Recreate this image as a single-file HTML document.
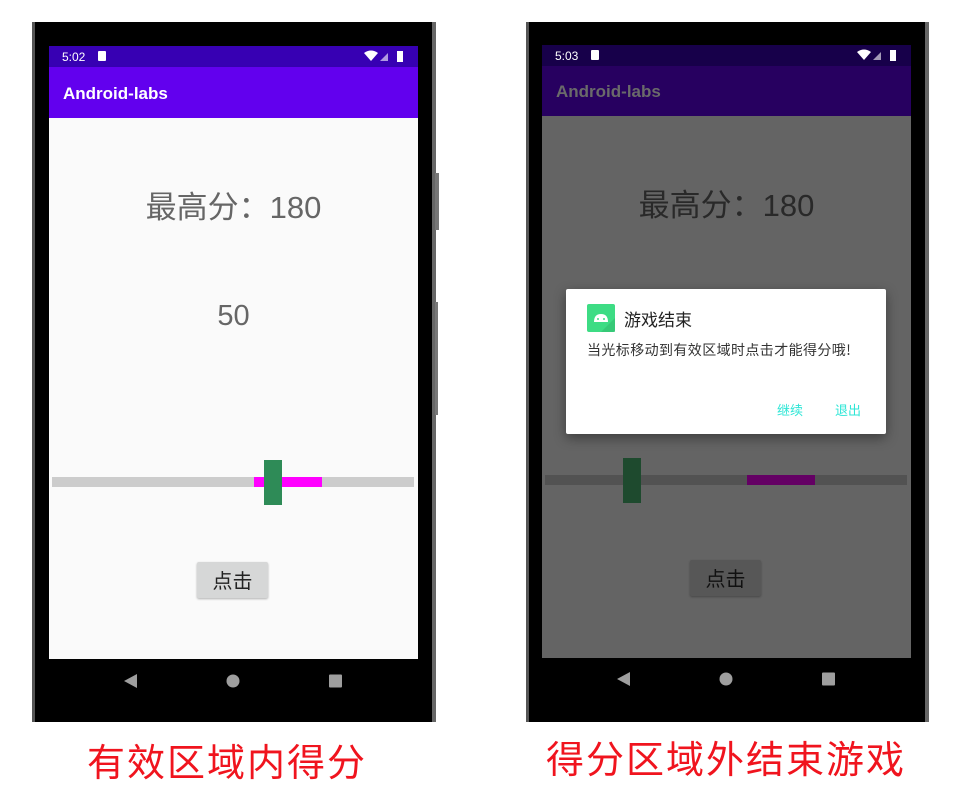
<!DOCTYPE html>
<html><head><meta charset="utf-8"><style>
*{margin:0;padding:0;box-sizing:border-box}
body{width:978px;height:812px;background:#fff;position:relative;overflow:hidden;font-family:"Liberation Sans","Noto Sans CJK SC",sans-serif}
.a{position:absolute}
.phone{background:#000;border-left:3px solid #555;border-right:4px solid #666}
.cjk{font-family:"Noto Sans CJK SC","WenQuanYi Zen Hei",sans-serif}
.mix{font-family:"Liberation Sans","Noto Sans CJK SC",sans-serif}
</style></head><body>

<div class="a phone" style="left:32px;top:22px;width:404px;height:700px"></div>
<div class="a" style="left:435px;top:173px;width:4px;height:57px;background:#777"></div>
<div class="a" style="left:435px;top:302px;width:3px;height:113px;background:#777"></div>
<div class="a" style="left:49px;top:46px;width:369px;height:21px;background:#3700b3"></div>
<div class="a" style="left:62px;top:50px;color:#fff;font-size:12px">5:02</div>
<div class="a" style="left:98px;top:51px;width:8px;height:10px;background:#fff;border-radius:1px"></div>
<svg class="a" style="left:364px;top:50px" width="44" height="14"><path d="M0 3 Q7 -2 14 3 L7 11Z" fill="#fff"/><path d="M16 11 L24 3 L24 11Z" fill="#fff" opacity=".6"/><rect x="33" y="1" width="6" height="11" fill="#fff"/></svg>
<div class="a" style="left:49px;top:67px;width:369px;height:51px;background:#6200ee;box-shadow:0 2px 3px rgba(0,0,0,.25)"></div>
<div class="a" style="left:63px;top:84px;color:#fff;font-size:17px;font-weight:bold">Android-labs</div>
<div class="a" style="left:49px;top:118px;width:369px;height:541px;background:#fafafa"></div>
<div class="a mix" style="left:49px;top:182px;width:369px;text-align:center;font-size:31px;color:#666">最高分：180</div>
<div class="a" style="left:49px;top:300px;width:369px;text-align:center;font-size:29px;color:#666">50</div>
<div class="a" style="left:52px;top:477px;width:362px;height:10px;background:#ccc"></div>
<div class="a" style="left:254px;top:477px;width:68px;height:10px;background:#f0f"></div>
<div class="a" style="left:264px;top:460px;width:18px;height:45px;background:#2e8b57"></div>
<div class="a cjk" style="left:197px;top:562px;width:71px;height:36px;background:#d6d7d7;box-shadow:0 1px 2px rgba(0,0,0,.3);border-radius:2px;text-align:center;line-height:36px;font-size:20px;color:#222">点击</div>
<div class="a" style="left:49px;top:659px;width:369px;height:63px;background:#000"></div>
<svg class="a" style="left:49px;top:659px" width="369" height="44"><path d="M75 22 L88 15 L88 29Z" fill="#9e9e9e"/><circle cx="184" cy="22" r="6.5" fill="#9e9e9e"/><rect x="280" y="15.5" width="13" height="13" rx="1" fill="#9e9e9e"/></svg>

<div class="a phone" style="left:526px;top:22px;width:403px;height:700px"></div>
<div class="a" style="left:542px;top:45px;width:369px;height:21px;background:#17004a"></div>
<div class="a" style="left:555px;top:49px;color:#fff;font-size:12px">5:03</div>
<div class="a" style="left:591px;top:50px;width:8px;height:10px;background:#fff;border-radius:1px"></div>
<svg class="a" style="left:857px;top:49px" width="44" height="14"><path d="M0 3 Q7 -2 14 3 L7 11Z" fill="#fff"/><path d="M16 11 L24 3 L24 11Z" fill="#fff" opacity=".6"/><rect x="33" y="1" width="6" height="11" fill="#fff"/></svg>
<div class="a" style="left:542px;top:66px;width:369px;height:50px;background:#270060"></div>
<div class="a" style="left:556px;top:82px;color:#6a6a6a;font-size:17px;font-weight:bold">Android-labs</div>
<div class="a" style="left:542px;top:116px;width:369px;height:542px;background:#646464"></div>
<div class="a mix" style="left:542px;top:180px;width:369px;text-align:center;font-size:31px;color:#292929">最高分：180</div>
<div class="a" style="left:545px;top:475px;width:362px;height:10px;background:#525252"></div>
<div class="a" style="left:747px;top:475px;width:68px;height:10px;background:#640064"></div>
<div class="a" style="left:623px;top:458px;width:18px;height:45px;background:#1e4a2e"></div>
<div class="a cjk" style="left:690px;top:560px;width:71px;height:36px;background:#575757;box-shadow:0 1px 2px rgba(0,0,0,.3);border-radius:2px;text-align:center;line-height:36px;font-size:20px;color:#111">点击</div>
<div class="a" style="left:542px;top:658px;width:369px;height:64px;background:#000"></div>
<svg class="a" style="left:542px;top:657px" width="369" height="44"><path d="M75 22 L88 15 L88 29Z" fill="#9e9e9e"/><circle cx="184" cy="22" r="6.5" fill="#9e9e9e"/><rect x="280" y="15.5" width="13" height="13" rx="1" fill="#9e9e9e"/></svg>

<div class="a" style="left:566px;top:289px;width:320px;height:145px;background:#fff;border-radius:2px;box-shadow:0 4px 12px rgba(0,0,0,.4)"></div>
<svg class="a" style="left:587px;top:304px" width="28" height="28"><rect width="28" height="28" rx="2" fill="#3ddc84"/><path d="M14 28 L28 14 L28 28Z" fill="#2fb56a" opacity=".5"/><path d="M7 18 Q7 10 14 10 Q21 10 21 18Z" fill="#fff"/><circle cx="11" cy="15" r="1" fill="#3ddc84"/><circle cx="17" cy="15" r="1" fill="#3ddc84"/></svg>
<div class="a cjk" style="left:624px;top:306px;font-size:17px;color:#222">游戏结束</div>
<div class="a cjk" style="left:587px;top:340px;font-size:14px;letter-spacing:0.4px;color:#333">当光标移动到有效区域时点击才能得分哦!</div>
<div class="a cjk" style="left:777px;top:400px;font-size:13px;color:#2ee6d6">继续</div>
<div class="a cjk" style="left:835px;top:400px;font-size:13px;color:#2ee6d6">退出</div>

<div class="a cjk" style="left:87px;top:732px;font-size:38px;color:#f0141e;letter-spacing:2px">有效区域内得分</div>
<div class="a cjk" style="left:546px;top:729px;font-size:38px;color:#f0141e;letter-spacing:2px">得分区域外结束游戏</div>
</body></html>
